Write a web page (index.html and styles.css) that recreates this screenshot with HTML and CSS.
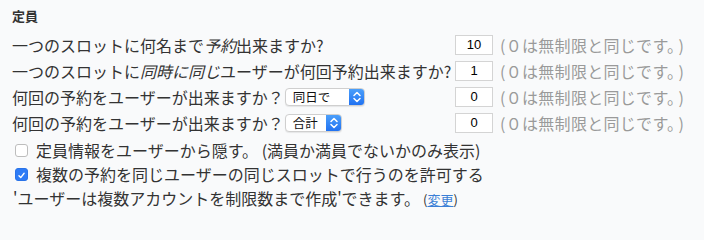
FILE: index.html
```html
<!DOCTYPE html>
<html lang="ja">
<head>
<meta charset="utf-8">
<link rel="stylesheet" href="styles.css">
</head>
<body>
<div class="panel">
  <div class="title">定員</div>
  <div class="grid">
    <div class="label">一つのスロットに何名まで<i>予約</i>出来ますか?</div>
    <div class="num">10</div>
    <div class="hint">(０は無制限と同じです。<span class="rp">)</span></div>

    <div class="label">一つのスロットに<i>同時に同じ</i>ユーザーが何回予約出来ますか?</div>
    <div class="num">1</div>
    <div class="hint">(０は無制限と同じです。<span class="rp">)</span></div>

    <div class="label">何回の予約をユーザーが出来ますか？<span class="select wide"><span class="val">同日で</span><span class="arrow"><svg width="16" height="18" viewBox="0 0 16 18"><path d="M5 7.5 L8 4.5 L11 7.5 M5 10.5 L8 13.5 L11 10.5" fill="none" stroke="#fff" stroke-width="1.5" stroke-linecap="round" stroke-linejoin="round"/></svg></span></span></div>
    <div class="num">0</div>
    <div class="hint">(０は無制限と同じです。<span class="rp">)</span></div>

    <div class="label">何回の予約をユーザーが出来ますか？<span class="select narrow"><span class="val">合計</span><span class="arrow"><svg width="16" height="18" viewBox="0 0 16 18"><path d="M5 7.5 L8 4.5 L11 7.5 M5 10.5 L8 13.5 L11 10.5" fill="none" stroke="#fff" stroke-width="1.5" stroke-linecap="round" stroke-linejoin="round"/></svg></span></span></div>
    <div class="num">0</div>
    <div class="hint">(０は無制限と同じです。<span class="rp">)</span></div>
  </div>
  <div class="check-row first">
    <span class="box"></span>
    <span>定員情報をユーザーから隠す。 (満員か満員でないかのみ表示)</span>
  </div>
  <div class="check-row">
    <span class="box checked"><svg width="13" height="13" viewBox="0 0 13 13"><path d="M3.5 6.8 L5.6 9 L9.6 3.8" fill="none" stroke="#fff" stroke-width="1.6" stroke-linecap="round" stroke-linejoin="round"/></svg></span>
    <span>複数の予約を同じユーザーの同じスロットで行うのを許可する</span>
  </div>
  <div class="note">'ユーザーは複数アカウントを制限数まで作成'できます。<span class="small">(<a href="#">変更</a>)</span></div>
</div>
</body>
</html>
```

FILE: styles.css
```css
html, body {
  margin: 0;
  padding: 0;
  background: #f9fafb;
}
body {
  font-family: "Noto Sans CJK JP", "Noto Sans", sans-serif;
  color: #333;
  font-size: 16px;
}
.panel {
  padding: 6px 0 0 12px;
}
.title {
  font-size: 13px;
  font-weight: bold;
  line-height: 20px;
  margin-bottom: 6px;
}
.grid {
  display: grid;
  grid-template-columns: 443px 38px auto;
  grid-auto-rows: 26px;
  align-items: center;
}
.label {
  display: flex;
  align-items: center;
  white-space: nowrap;
  line-height: 26px;
}
.label i {
  font-style: italic;
}
.num {
  height: 20px;
  box-sizing: border-box;
  background: #fff;
  border: 1px solid #d4d4d4;
  font-family: "Liberation Sans", Arial, sans-serif;
  font-size: 13px;
  color: #000;
  line-height: 18px;
  text-align: center;
}
.hint {
  color: #9a9a9a;
  padding-left: 7px;
  white-space: nowrap;
  line-height: 26px;
  letter-spacing: 0.3px;
}
.hint .rp {
  margin-left: 3px;
}
.select {
  display: inline-flex;
  height: 18px;
  box-sizing: border-box;
  margin-left: 1px;
  background: #fff;
  border: 1px solid #cfcfcf;
  border-radius: 4px;
  overflow: hidden;
  box-shadow: 0 1px 1px rgba(0,0,0,0.08);
}
.select.wide { width: 80px; }
.select.narrow { width: 57px; }
.select .val {
  flex: 1;
  font-size: 12.5px;
  line-height: 16px;
  padding-left: 7px;
  color: #111;
}
.select .arrow {
  width: 16px;
  margin: -1px -1px -1px 0;
  background: linear-gradient(#4ea2fb, #1e6ff1);
  border-radius: 0 4px 4px 0;
  display: flex;
  align-items: center;
  justify-content: center;
}
.check-row {
  display: flex;
  align-items: center;
  height: 24px;
  white-space: nowrap;
}
.check-row.first {
  margin-top: 2px;
}
.box {
  width: 13px;
  height: 13px;
  box-sizing: border-box;
  border: 1px solid #bdbdbd;
  border-radius: 3px;
  background: #fff;
  margin: 0 8px 0 3px;
  display: inline-flex;
}
.box.checked {
  background: #2e7cf6;
  border-color: #2a73e8;
}
.note {
  height: 24px;
  line-height: 24px;
  padding-left: 1px;
  white-space: nowrap;
}
.small {
  font-size: 13px;
  margin-left: 3px;
}
.small a {
  color: #3b7fd6;
  text-decoration: underline;
}
```
